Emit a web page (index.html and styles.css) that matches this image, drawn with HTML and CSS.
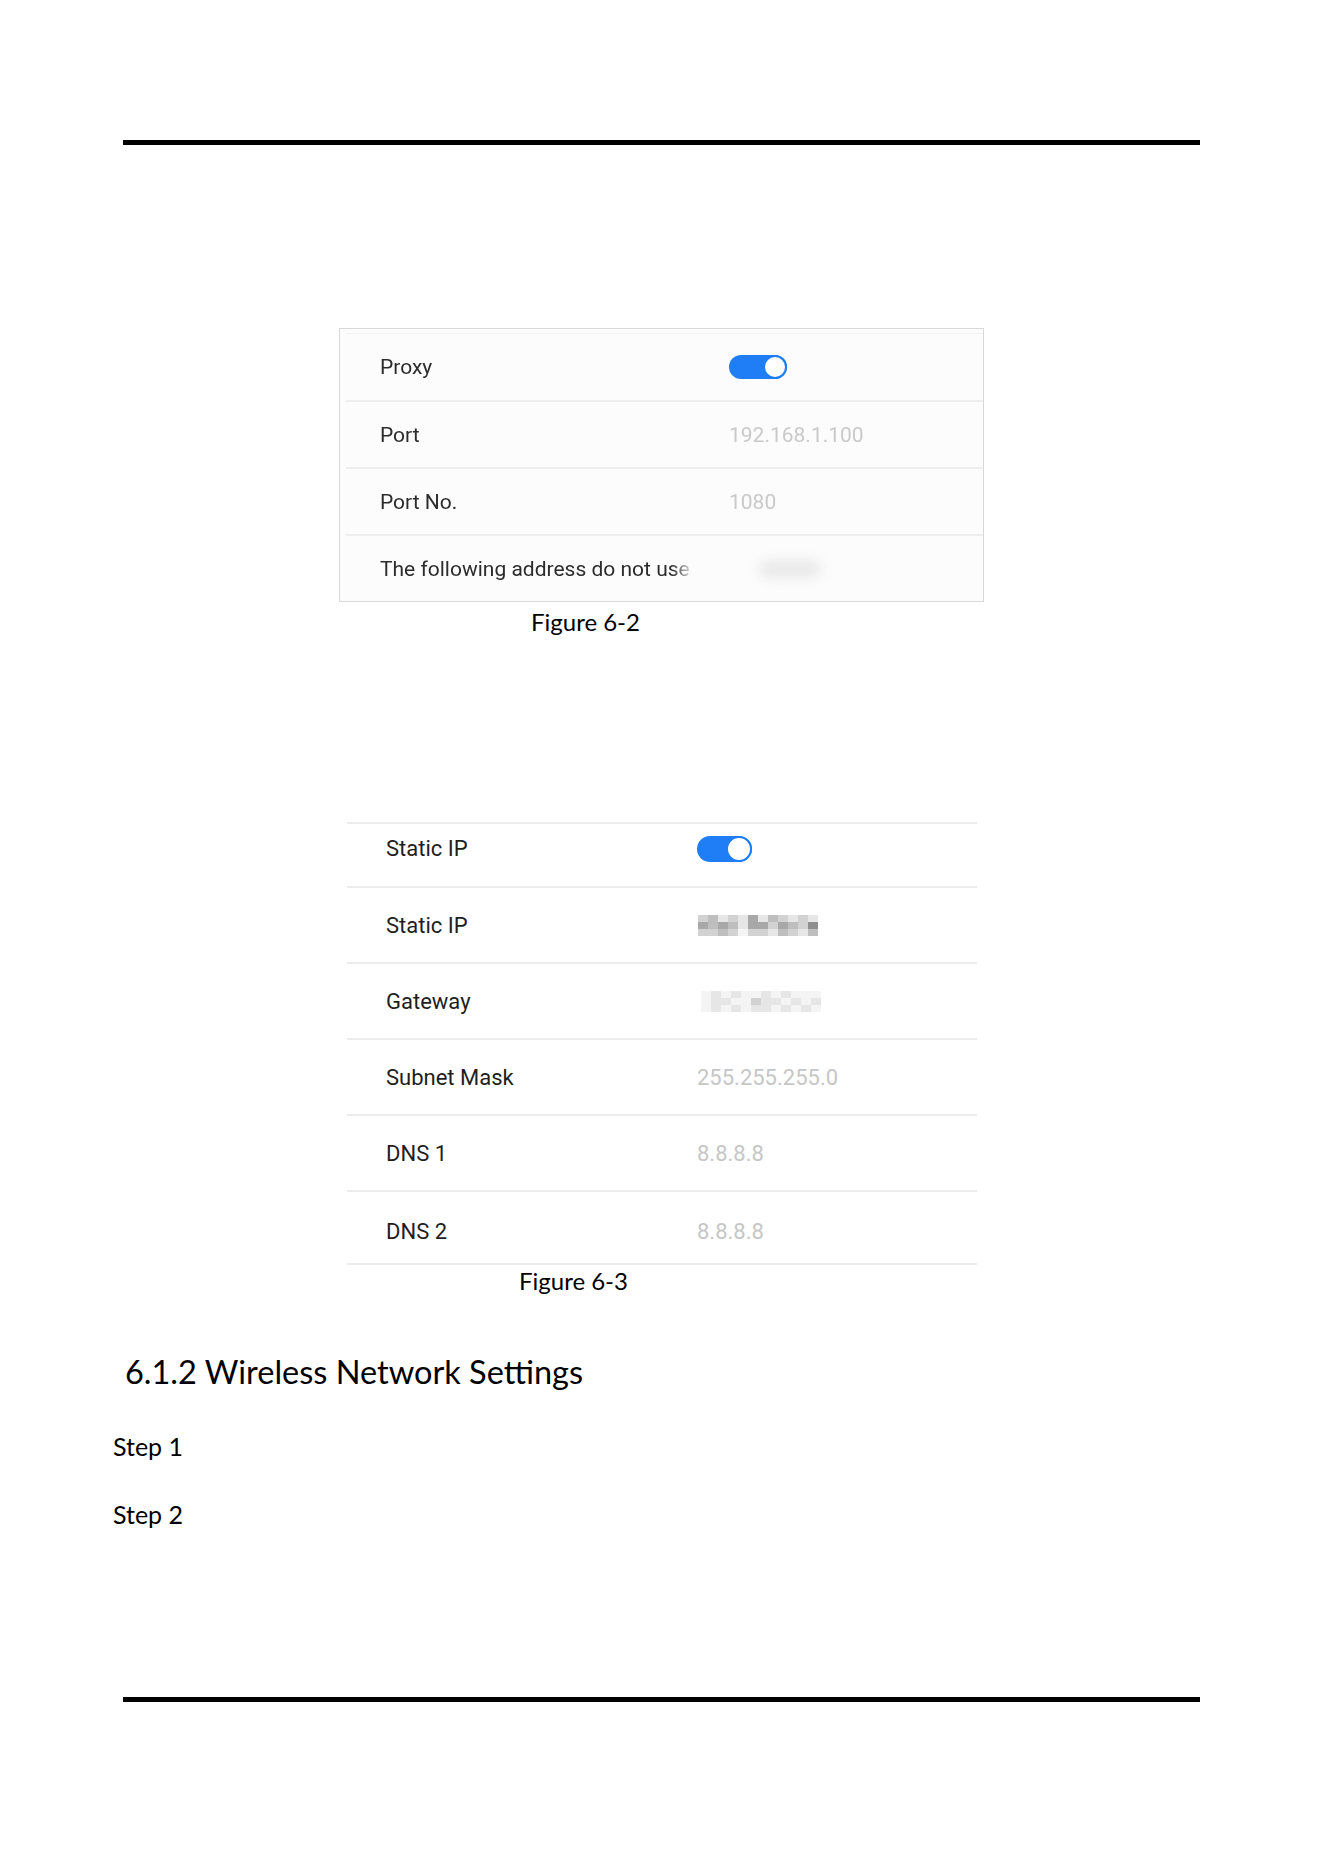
FILE: index.html
```html
<!DOCTYPE html>
<html lang="en">
<head>
    <meta charset="UTF-8">
    <meta name="viewport" content="width=device-width, initial-scale=1.0">
    <title>6.1 Network Settings</title>
    <link rel="stylesheet" href="styles.css">
</head>
<body>
    <div class="page">
        <div class="rule rule-top"></div>

        <!-- proxy settings screen -->
        <div class="panel">
            <div class="panel-list">
                <div class="prow">
                    <span class="plabel">Proxy</span>
                    <span class="toggle toggle-sm"><span class="knob"></span></span>
                </div>
                <div class="prow">
                    <span class="plabel">Port</span>
                    <span class="pvalue">192.168.1.100</span>
                </div>
                <div class="prow">
                    <span class="plabel">Port No.</span>
                    <span class="pvalue">1080</span>
                </div>
                <div class="prow">
                    <span class="plabel fade">The following address do not use</span>
                    <span class="smudge"></span>
                </div>
            </div>
        </div>
        <p class="caption caption-62">Figure 6-2</p>

        <!-- static ip screen -->
        <div class="list">
            <div class="row row-first">
                <span class="label">Static IP</span>
                <span class="toggle"><span class="knob"></span></span>
            </div>
            <div class="row">
                <span class="label">Static IP</span>
                <span class="mosaic">
                    <i class="s3"></i><i class="s2"></i><i class="s4"></i><i class="s3"></i><i class="s4"></i><i class="s1"></i><i class="s4"></i><i class="s2"></i><i class="s3"></i><i class="s4"></i><i class="s3"></i><i class="s4"></i>
                    <i class="s1"></i><i class="s2"></i><i class="s1"></i><i class="s2"></i><i class="s4"></i><i class="s1"></i><i class="s1"></i><i class="s3"></i><i class="s1"></i><i class="s2"></i><i class="s3"></i><i class="s0"></i>
                    <i class="s3"></i><i class="s3"></i><i class="s2"></i><i class="s3"></i><i class="s5"></i><i class="s3"></i><i class="s3"></i><i class="s4"></i><i class="s2"></i><i class="s3"></i><i class="s4"></i><i class="s2"></i>
                </span>
            </div>
            <div class="row">
                <span class="label">Gateway</span>
                <span class="mosaic pale">
                    <i class="s5"></i><i class="s4"></i><i class="s5"></i><i class="s4"></i><i class="s5"></i><i class="s5"></i><i class="s4"></i><i class="s5"></i><i class="s4"></i><i class="s5"></i><i class="s5"></i><i class="s5"></i>
                    <i class="s5"></i><i class="s4"></i><i class="s4"></i><i class="s5"></i><i class="s5"></i><i class="s3"></i><i class="s4"></i><i class="s4"></i><i class="s5"></i><i class="s4"></i><i class="s5"></i><i class="s4"></i>
                    <i class="s5"></i><i class="s4"></i><i class="s5"></i><i class="s4"></i><i class="s5"></i><i class="s4"></i><i class="s4"></i><i class="s5"></i><i class="s4"></i><i class="s5"></i><i class="s4"></i><i class="s5"></i>
                </span>
            </div>
            <div class="row">
                <span class="label">Subnet Mask</span>
                <span class="value">255.255.255.0</span>
            </div>
            <div class="row">
                <span class="label">DNS 1</span>
                <span class="value">8.8.8.8</span>
            </div>
            <div class="row row-last">
                <span class="label">DNS 2</span>
                <span class="value">8.8.8.8</span>
            </div>
        </div>
        <p class="caption caption-63">Figure 6-3</p>

        <h2 class="section-title">6.1.2 Wireless Network Settings</h2>
        <p class="step step-1">Step 1</p>
        <p class="step">Step 2</p>

        <div class="rule rule-bottom"></div>
    </div>
</body>
</html>
```

FILE: styles.css
```css
body {
    margin: 0;
    background: #fff;
    font-family: Lato, "Open Sans", sans-serif;
    color: #000;
}
.page {
    width: 1324px;
    height: 1872px;
    overflow: hidden;
}
.rule {
    height: 5px;
    width: 1077px;
    margin-left: 123px;
    background: #000;
}
.rule-top {
    margin-top: 140px;
}
.rule-bottom {
    margin-top: 167px;
}

/* figure 6-2 */
.panel {
    margin: 183px 0 0 339px;
    width: 643px;
    border: 1px solid #d8d8d8;
    background: #fcfcfc;
    padding-top: 4px;
    font-family: Roboto, sans-serif;
    font-size: 21px;
    filter: blur(0.5px);
}
.panel-list {
    border-top: 1px solid #f1f1f1;
    margin-left: 6px;
}
.prow {
    display: flex;
    align-items: center;
    height: 65px;
    border-top: 2px solid #eeeeee;
}
.prow:first-child {
    border-top: none;
    height: 66px;
}
.plabel {
    width: 314px;
    margin: 0 35px 0 34px;
    color: #2c2c2c;
    white-space: nowrap;
    overflow: hidden;
}
.fade {
    -webkit-mask-image: linear-gradient(to right, #000 93%, transparent 100%);
    mask-image: linear-gradient(to right, #000 93%, transparent 100%);
}
.pvalue {
    color: #c9c9c9;
}
.smudge {
    width: 62px;
    height: 18px;
    margin-left: 30px;
    border-radius: 9px;
    background: #e9e9e9;
    filter: blur(6px);
}

.toggle {
    position: relative;
    display: inline-block;
    width: 55px;
    height: 26px;
    border-radius: 13px;
    background: #1f7ef6;
}
.toggle-sm {
    width: 58px;
    height: 24px;
    border-radius: 12px;
}
.knob {
    position: absolute;
    top: 0;
    right: 0;
    width: 22px;
    height: 22px;
    border-radius: 50%;
    background: #fff;
    border: 2px solid #1f7ef6;
}
.toggle-sm .knob {
    width: 20px;
    height: 20px;
}

/* figure 6-3 */
.list {
    margin: 185px 0 0 347px;
    width: 630px;
    border-top: 2px solid #ececec;
    border-bottom: 2px solid #ececec;
    font-family: Roboto, sans-serif;
    font-size: 22px;
}
.row {
    display: flex;
    align-items: center;
    height: 74px;
    border-top: 2px solid #ececec;
}
.row-first {
    border-top: none;
    height: 62px;
    align-items: flex-start;
    padding-top: 12px;
    box-sizing: border-box;
}
.row-last {
    height: 73px;
    padding-top: 8px;
    box-sizing: border-box;
}
.label {
    width: 311px;
    padding-left: 39px;
    color: #1e1e1e;
}
.row-first .label {
    line-height: 26px;
}
.value {
    color: #c6c6c6;
}
.mosaic {
    display: grid;
    grid-template-columns: repeat(12, 10px);
    grid-auto-rows: 7px;
    margin-left: 1px;
}
.mosaic.pale {
    margin-left: 4px;
}
.mosaic i { display: block; }
.mosaic .s0 { background: #8f8f8f; }
.mosaic .s1 { background: #a8a8a8; }
.mosaic .s2 { background: #bebebe; }
.mosaic .s3 { background: #d2d2d2; }
.mosaic .s4 { background: #e6e6e6; }
.mosaic .s5 { background: #f4f4f4; }

.caption {
    margin: 0;
    font-size: 24px;
    line-height: 30px;
}
.caption-62 {
    margin: 5px 0 0 531px;
}
.caption-63 {
    margin: 1px 0 0 519px;
}
.section-title {
    margin: 54px 0 0 125px;
    font-size: 32.5px;
    font-weight: 400;
    line-height: 44px;
}
.step {
    margin: 36px 0 0 113px;
    font-size: 25px;
    line-height: 32px;
}
```
